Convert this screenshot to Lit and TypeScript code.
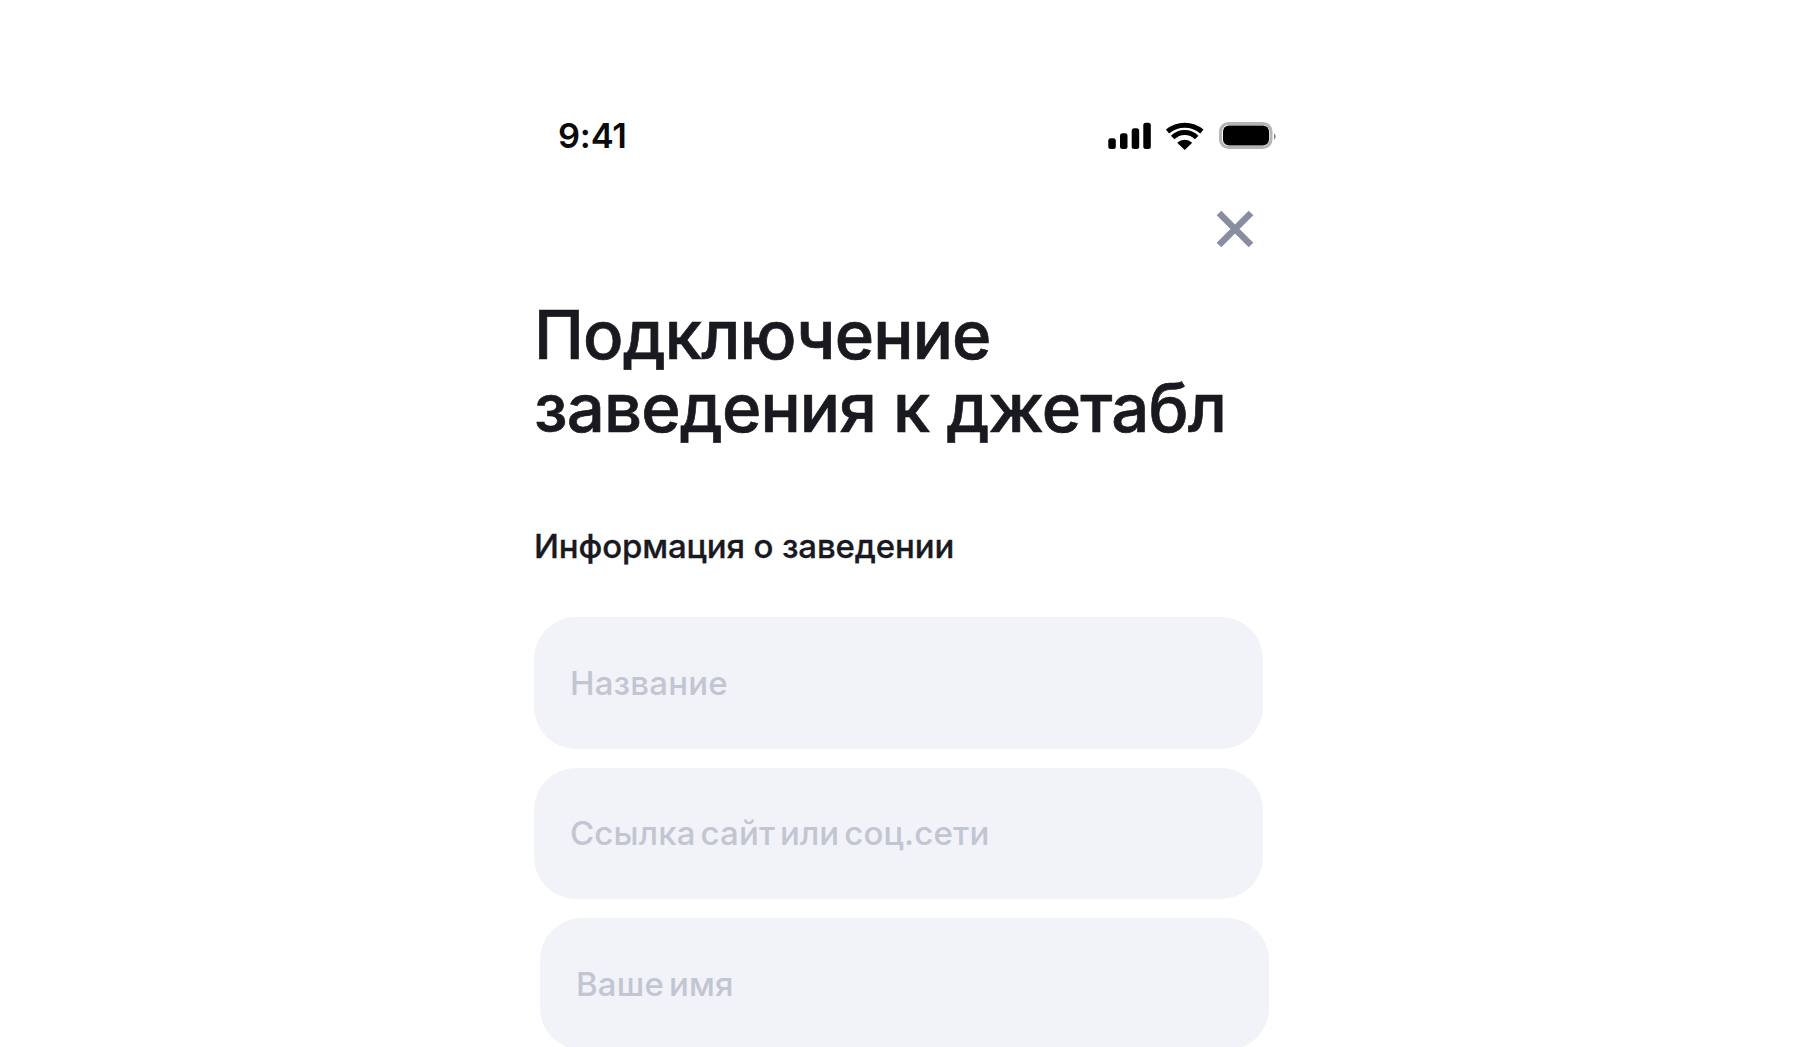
import { LitElement, html, css } from "lit";
import { customElement } from "lit/decorators.js";

@customElement("app-root")
export class AppRoot extends LitElement {
  static styles = css`
    :host { display: block; height: 1047px; overflow: hidden; background: #fff; font-family: Inter, "Liberation Sans", sans-serif; }
    .screen { width: 729px; margin-left: 534px; padding-top: 116px; box-sizing: content-box; }
    .status { display: flex; align-items: center; height: 40px; padding-left: 24px; margin-right: -15px; }
    .time { flex: 1; font-size: 34.5px; line-height: 38px; font-weight: 600; letter-spacing: -0.2px; color: #0a0a0a; }
    .status-icons { display: block; }
    .close-row { display: flex; justify-content: flex-end; padding: 54px 9px 0 0; }
    .close { display: block; }
    h1 { margin: 51px 0 0; font-size: 67px; line-height: 72.5px; font-weight: 500; letter-spacing: -0.85px; -webkit-text-stroke: 0.7px #191a1f; color: #191a1f; }
    h2 { margin: 82px 0 0; font-size: 33px; line-height: 40px; font-weight: 500; letter-spacing: -0.15px; -webkit-text-stroke: 0.3px #191a1f; color: #191a1f; }
    .fields { display: flex; flex-direction: column; gap: 19px; margin-top: 51px; }
    .field { height: 131.5px; flex: none; border-radius: 42px; background: #f1f3f8; display: flex; align-items: center; padding-left: 36px; font-size: 33px; font-weight: 500; color: #c2c6d2; letter-spacing: 0.15px; word-spacing: -4px; }
    .shift { margin-left: 6px; margin-right: -6px; }
  `;

  render() {
    return html`
      <div class="screen">
        <div class="status">
          <span class="time">9:41</span>
          <svg class="status-icons" width="171" height="30" viewBox="0 0 171 30">
            <rect x="1.3" y="17.3" width="7.5" height="10.7" rx="2.5" fill="#000"/>
            <rect x="13" y="12.3" width="7.5" height="15.7" rx="2.5" fill="#000"/>
            <rect x="24.7" y="7.3" width="7.5" height="20.7" rx="2.5" fill="#000"/>
            <rect x="36.3" y="1.7" width="7.5" height="26.3" rx="2.5" fill="#000"/>
            <path d="M60.5 10.5 a 26.6 26.6 0 0 1 34.4 0 M65.7 16.5 a 17 17 0 0 1 24 0" fill="none" stroke="#000" stroke-width="5"/>
            <path d="M70.2 21.8 a 11 11 0 0 1 15 0 L77.7 29 Z" fill="#000"/>
            <rect x="113.5" y="2.5" width="50.5" height="24" rx="8" fill="none" stroke="#b5b5b5" stroke-width="3"/>
            <rect x="116" y="4.5" width="46" height="20" rx="6" fill="#000"/>
            <path d="M167 12 q 3.5 3.5 0 7 Z" fill="#888"/>
          </svg>
        </div>
        <div class="close-row">
          <svg class="close" width="38" height="38" viewBox="0 0 38 38">
            <path d="M3 3 L35 35 M35 3 L3 35" stroke="#878ea1" stroke-width="6.5" fill="none"/>
          </svg>
        </div>
        <h1>Подключение<br />заведения к джетабл</h1>
        <h2>Информация о заведении</h2>
        <div class="fields">
          <div class="field">Название</div>
          <div class="field">Ссылка сайт или соц.сети</div>
          <div class="field shift">Ваше имя</div>
        </div>
      </div>
    `;
  }
}
